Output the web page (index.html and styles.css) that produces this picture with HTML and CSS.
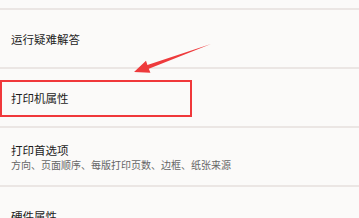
FILE: index.html
```html
<!DOCTYPE html>
<html lang="zh-CN">
  <head>
    <meta charset="UTF-8" />
    <title>打印机设置</title>
    <link rel="stylesheet" href="styles.css">
  </head>
  <body>
    <div class="page">
      <div class="settings-list">
        <div class="setting-card"></div>
        <div class="setting-card">
          <div class="setting-title">运行疑难解答</div>
        </div>
        <div class="setting-card">
          <div class="setting-title">打印机属性</div>
        </div>
        <div class="setting-card">
          <div class="setting-title">打印首选项</div>
          <div class="setting-desc">方向、页面顺序、每版打印页数、边框、纸张来源</div>
        </div>
        <div class="setting-card">
          <div class="setting-title">硬件属性</div>
        </div>
      </div>

      <div class="highlight-box"></div>
      <svg class="arrow" width="359" height="218" viewBox="0 0 359 218">
        <polygon points="134,72 146,60.8 147.4,64.9 211,44 148.8,68.7 150.4,72.8" fill="#ee3a3c" />
      </svg>
    </div>
  </body>
</html>
```

FILE: styles.css
```css
body {
  margin: 0;
  background-color: #ebe6e4;
  font-family: "Noto Sans CJK SC", "Noto Sans", sans-serif;
  overflow: hidden;
}

.page {
  position: relative;
  width: 359px;
  height: 218px;
  overflow: hidden;
}

.settings-list {
  display: flex;
  flex-direction: column;
  gap: 2px;
  margin-top: -49px;
}

.setting-card {
  display: flex;
  flex-direction: column;
  justify-content: center;
  height: 57px;
  padding: 0 11px;
  background-color: #fbfaf9;
}

.setting-title {
  font-size: 11.5px;
  line-height: 14px;
  color: #1c1c1c;
}

.setting-desc {
  margin-top: 1px;
  font-size: 10px;
  line-height: 13px;
  color: #666;
}

.highlight-box {
  position: absolute;
  left: 0;
  top: 80px;
  width: 188px;
  height: 33px;
  border: 2px solid #f0383b;
}

.arrow {
  position: absolute;
  left: 0;
  top: 0;
}
```
